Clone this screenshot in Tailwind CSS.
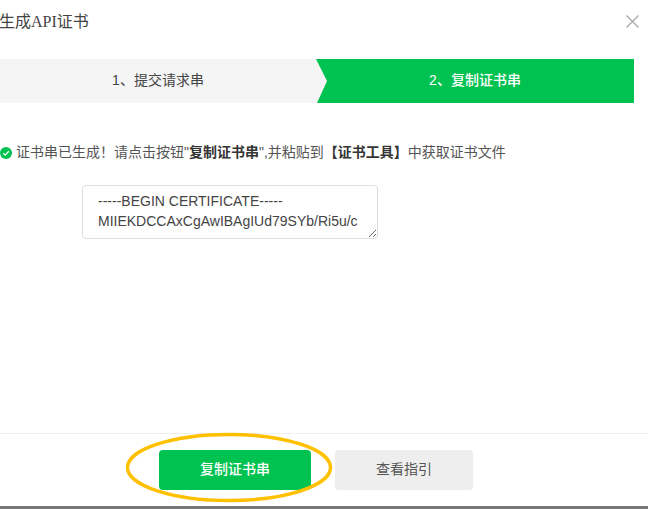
<!DOCTYPE html>
<html lang="zh-CN">
<head>
<meta charset="utf-8">
<script src="https://cdn.jsdelivr.net/npm/@tailwindcss/browser@4"></script>
</head>
<body class="bg-white overflow-hidden">
<div class="relative w-[648px] h-[509px] flex flex-col overflow-hidden bg-white text-[#353535] font-['Liberation_Sans','Noto_Sans_CJK_SC',sans-serif]">
  <header class="h-[59px] flex items-start justify-between shrink-0">
    <h1 class="mt-[11px] -ml-px text-base leading-[22px] font-normal text-[#444] font-['Liberation_Serif','Noto_Sans_CJK_SC',serif]">生成API证书</h1>
    <button class="mt-[15px] mr-[9px] w-[13px] h-[13px]" aria-label="关闭">
      <svg viewBox="0 0 13 13" class="w-[13px] h-[13px] block"><path d="M.5.5l12 12M12.5.5l-12 12" stroke="#a5a5a5" stroke-width="1.2" fill="none"/></svg>
    </button>
  </header>

  <div class="w-[634px] h-[44px] flex bg-[#f5f5f5] text-sm leading-[42px] shrink-0">
    <div class="w-[316px] text-center text-[#444]">1、提交请求串</div>
    <div class="w-[318px] text-center text-white font-medium bg-[#00c250] [clip-path:polygon(0_0,100%_0,100%_100%,1px_100%,11px_50%)]">2、复制证书串</div>
  </div>

  <p class="mt-[39px] flex items-center text-sm leading-5 text-[#555] whitespace-nowrap">
    <svg viewBox="0 0 12 12" class="w-3 h-3 mt-0.5 mr-1 shrink-0"><circle cx="6" cy="6" r="6" fill="#00c250"/><path d="M3.2 6.1l2 2 3.6-3.8" stroke="#fff" stroke-width="1.3" fill="none"/></svg>
    <span>证书串已生成！请点击按钮"<b class="font-bold text-[#353535]">复制证书串</b>",并粘贴到<b class="font-bold text-[#353535]">【证书工具】</b>中获取证书文件</span>
  </p>

  <textarea readonly class="mt-[23px] ml-[82px] w-[296px] h-[54px] shrink-0 px-[15px] py-[5px] border border-[#ddd] rounded text-sm leading-5 text-[#444] overflow-hidden resize outline-none">-----BEGIN CERTIFICATE-----
MIIEKDCCAxCgAwIBAgIUd79SYb/Ri5u/c</textarea>

  <footer class="mt-auto h-[73px] border-t border-[#eee] shrink-0 w-full">
    <div class="w-[632px] flex justify-center gap-6 pt-4 text-sm">
      <button class="w-[152px] h-10 pb-0.5 rounded bg-[#00c250] text-white font-medium">复制证书串</button>
      <button class="w-[138px] h-10 pb-0.5 rounded bg-[#eee] text-[#555]">查看指引</button>
    </div>
  </footer>
  <div class="h-[3px] bg-[#777] shrink-0"></div>

  <svg class="absolute left-0 top-0 pointer-events-none" width="648" height="509" viewBox="0 0 648 509" fill="none">
    <ellipse cx="229" cy="467.5" rx="101.5" ry="33" stroke="#ffc000" stroke-width="3.5"/>
  </svg>
</div>
</body>
</html>
